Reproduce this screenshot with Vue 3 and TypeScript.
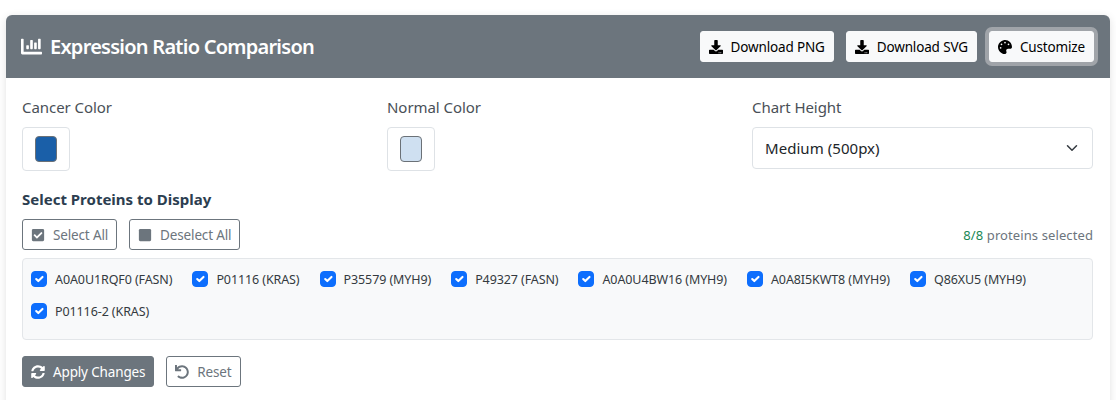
<script setup lang="ts">
import { computed, ref } from 'vue'

interface Protein { id: string; selected: boolean }

const proteins = ref<Protein[]>([
  { id: 'A0A0U1RQF0 (FASN)', selected: true },
  { id: 'P01116 (KRAS)', selected: true },
  { id: 'P35579 (MYH9)', selected: true },
  { id: 'P49327 (FASN)', selected: true },
  { id: 'A0A0U4BW16 (MYH9)', selected: true },
  { id: 'A0A8I5KWT8 (MYH9)', selected: true },
  { id: 'Q86XU5 (MYH9)', selected: true },
  { id: 'P01116-2 (KRAS)', selected: true },
])
const cancer = ref('#1a5fa8')
const normal = ref('#cfe0f1')
const height = ref('500')
const count = computed(() => proteins.value.filter((p) => p.selected).length)
const setAll = (v: boolean) => proteins.value.forEach((p) => (p.selected = v))

const icons = {
  chart: 'M332.8 320h38.4c6.4 0 12.8-6.4 12.8-12.8V172.8c0-6.4-6.4-12.8-12.8-12.8h-38.4c-6.4 0-12.8 6.4-12.8 12.8v134.4c0 6.4 6.4 12.8 12.8 12.8zm96 0h38.4c6.4 0 12.8-6.4 12.8-12.8V76.8c0-6.4-6.4-12.8-12.8-12.8h-38.4c-6.4 0-12.8 6.4-12.8 12.8v230.4c0 6.4 6.4 12.8 12.8 12.8zm-288 0h38.4c6.4 0 12.8-6.4 12.8-12.8v-70.4c0-6.4-6.4-12.8-12.8-12.8h-38.4c-6.4 0-12.8 6.4-12.8 12.8v70.4c0 6.4 6.4 12.8 12.8 12.8zm96 0h38.4c6.4 0 12.8-6.4 12.8-12.8V108.8c0-6.4-6.4-12.8-12.8-12.8h-38.4c-6.4 0-12.8 6.4-12.8 12.8v198.4c0 6.4 6.4 12.8 12.8 12.8zM496 384H64V80c0-8.84-7.16-16-16-16H16C7.16 64 0 71.16 0 80v336c0 17.67 14.33 32 32 32h464c8.84 0 16-7.16 16-16v-32c0-8.84-7.16-16-16-16z',
  download: 'M216 0h80c13.3 0 24 10.7 24 24v168h87.7c17.8 0 26.7 21.5 14.1 34.1L269.7 378.3c-7.5 7.5-19.8 7.5-27.3 0L90.1 226.1c-12.6-12.6-3.7-34.1 14.1-34.1H192V24c0-13.3 10.7-24 24-24zm296 376v112c0 13.3-10.7 24-24 24H24c-13.3 0-24-10.7-24-24V376c0-13.3 10.7-24 24-24h146.7l49 49c20.1 20.1 52.5 20.1 72.6 0l49-49H488c13.3 0 24 10.7 24 24zm-124 88c0-11-9-20-20-20s-20 9-20 20 9 20 20 20 20-9 20-20zm64 0c0-11-9-20-20-20s-20 9-20 20 9 20 20 20 20-9 20-20z',
  palette: 'M204.3 5C104.9 24.4 24.8 104.3 5.2 203.4c-37 187 131.7 326.4 258.8 306.7 41.2-6.4 61.4-54.6 42.5-91.7-23.1-45.4 9.9-98.4 60.9-98.4h79.7c35.8 0 64.8-29.6 64.9-65.3C511.5 97.1 368.1-26.9 204.3 5zM96 320c-17.7 0-32-14.3-32-32s14.3-32 32-32 32 14.3 32 32-14.3 32-32 32zm32-128c-17.7 0-32-14.3-32-32s14.3-32 32-32 32 14.3 32 32-14.3 32-32 32zm128-64c-17.7 0-32-14.3-32-32s14.3-32 32-32 32 14.3 32 32-14.3 32-32 32zm128 64c-17.7 0-32-14.3-32-32s14.3-32 32-32 32 14.3 32 32-14.3 32-32 32z',
  sync: 'M370.72 133.28C339.458 104.008 298.888 87.962 255.848 88c-77.458.068-144.328 53.178-162.791 126.85-1.344 5.363-6.122 9.15-11.651 9.15H24.103c-7.498 0-13.194-6.807-11.807-14.176C33.933 94.924 134.813 8 256 8c66.448 0 126.791 26.136 171.315 68.685L463.03 40.97C478.149 25.851 504 36.559 504 57.941V192c0 13.255-10.745 24-24 24H345.941c-21.382 0-32.09-25.851-16.971-40.971l41.75-41.749zM32 296h134.059c21.382 0 32.09 25.851 16.971 40.971l-41.75 41.75c31.262 29.273 71.835 45.319 114.876 45.28 77.418-.07 144.315-53.144 162.787-126.849 1.344-5.363 6.122-9.15 11.651-9.15h57.304c7.498 0 13.194 6.807 11.807 14.176C478.067 417.076 377.187 504 256 504c-66.448 0-126.791-26.136-171.315-68.685L48.97 471.03C33.851 486.149 8 475.441 8 454.059V320c0-13.255 10.745-24 24-24z',
  undo: 'M212.333 224.333H12c-6.627 0-12-5.373-12-12V12C0 5.373 5.373 0 12 0h48c6.627 0 12 5.373 12 12v78.112C117.773 39.279 184.26 7.47 258.175 8.007c136.906.994 246.448 111.623 246.157 248.532C504.041 393.258 393.12 504 256.333 504c-64.089 0-122.496-24.313-166.51-64.215-5.099-4.622-5.334-12.554-.467-17.42l33.967-33.967c4.474-4.474 11.662-4.717 16.401-.525C170.76 415.336 211.58 432 256.333 432c97.268 0 176-78.716 176-176 0-97.267-78.716-176-176-176-58.496 0-110.28 28.476-142.274 72.333h98.274c6.627 0 12 5.373 12 12v48c0 6.627-5.373 12-12 12z',
  check: 'M400 480H48c-26.51 0-48-21.49-48-48V80c0-26.51 21.49-48 48-48h352c26.51 0 48 21.49 48 48v352c0 26.51-21.49 48-48 48zm-204.686-98.059l184-184c6.248-6.248 6.248-16.379 0-22.627l-22.627-22.627c-6.248-6.248-16.379-6.249-22.628 0L184 302.745l-70.059-70.059c-6.248-6.248-16.379-6.248-22.628 0l-22.627 22.627c-6.248 6.248-6.248 16.379 0 22.627l104 104c6.249 6.25 16.379 6.25 22.628.001z',
  square: 'M400 32H48C21.5 32 0 53.5 0 80v352c0 26.5 21.5 48 48 48h352c26.5 0 48-21.5 48-48V80c0-26.5-21.5-48-48-48z',
}
</script>

<template>
  <div class="page">
    <section class="card">
      <header class="card-header">
        <h2 class="title">
          <svg class="title-icon" viewBox="0 0 512 512"><path :d="icons.chart" /></svg>
          Expression Ratio Comparison
        </h2>
        <div class="header-actions">
          <button class="btn light">
            <svg class="ico" viewBox="0 0 512 512"><path :d="icons.download" /></svg>Download PNG
          </button>
          <button class="btn light">
            <svg class="ico" viewBox="0 0 512 512"><path :d="icons.download" /></svg>Download SVG
          </button>
          <button class="btn light focused">
            <svg class="ico" viewBox="0 0 512 512"><path :d="icons.palette" /></svg>Customize
          </button>
        </div>
      </header>

      <div class="card-body">
        <div class="controls">
          <div class="field">
            <label class="label">Cancer Color</label>
            <input v-model="cancer" class="color" type="color" />
          </div>
          <div class="field">
            <label class="label">Normal Color</label>
            <input v-model="normal" class="color" type="color" />
          </div>
          <div class="field">
            <label class="label">Chart Height</label>
            <div class="select-wrap">
              <select v-model="height" class="select">
                <option value="300">Small (300px)</option>
                <option value="500">Medium (500px)</option>
                <option value="700">Large (700px)</option>
              </select>
              <svg class="chevron" viewBox="0 0 16 16"><path d="m2 5 6 6 6-6" /></svg>
            </div>
          </div>
        </div>

        <h6 class="section-title">Select Proteins to Display</h6>

        <div class="toolbar">
          <div class="toolbar-buttons">
            <button class="btn outline" @click="setAll(true)">
              <svg class="ico" viewBox="0 0 448 512"><path :d="icons.check" /></svg>Select All
            </button>
            <button class="btn outline" @click="setAll(false)">
              <svg class="ico" viewBox="0 0 448 512"><path :d="icons.square" /></svg>Deselect All
            </button>
          </div>
          <small class="counter"><span class="count">{{ count }}/{{ proteins.length }}</span> proteins selected</small>
        </div>

        <div class="protein-box">
          <label v-for="p in proteins" :key="p.id" class="protein">
            <input v-model="p.selected" class="check" type="checkbox" />
            <span>{{ p.id }}</span>
          </label>
        </div>

        <div class="footer-actions">
          <button class="btn solid">
            <svg class="ico" viewBox="0 0 512 512"><path :d="icons.sync" /></svg>Apply Changes
          </button>
          <button class="btn outline">
            <svg class="ico" viewBox="0 0 512 512"><path :d="icons.undo" /></svg>Reset
          </button>
        </div>
      </div>
    </section>
  </div>
</template>

<style scoped>
.page {
  box-sizing: border-box;
  padding: 15px 6px 0;
  height: 400px;
  overflow: hidden;
  font-family: "Noto Sans", "Open Sans", sans-serif;
  color: #212529;
}
.card {
  background: #fff;
  border-radius: 6px;
  box-shadow: 0 2px 8px rgba(0, 0, 0, 0.12);
}
.card-header {
  height: 63px;
  background: #6c757d;
  border-radius: 6px 6px 0 0;
  display: flex;
  align-items: center;
  justify-content: space-between;
  padding: 0 16px 0 15px;
}
.title {
  margin: 0;
  display: flex;
  align-items: center;
  gap: 8px;
  color: #fff;
  font-size: 20px;
  font-weight: 600;
  letter-spacing: -0.75px;
}
.title-icon {
  width: 21px;
  height: 21px;
  fill: #fff;
}
.header-actions {
  display: flex;
  gap: 12px;
}
.btn {
  display: inline-flex;
  align-items: center;
  height: 31px;
  padding: 0 8px;
  border-radius: 3px;
  border: 1px solid transparent;
  font-family: inherit;
  font-size: 13.5px;
  letter-spacing: -0.15px;
  white-space: nowrap;
  cursor: pointer;
}
.ico {
  width: 14px;
  height: 14px;
  margin-right: 8px;
  fill: currentColor;
  flex: none;
}
.btn.light {
  background: #f8f9fa;
  border-color: #f8f9fa;
  color: #000;
}
.btn.focused {
  box-shadow: 0 0 0 4px rgba(211, 212, 213, 0.5);
}
.btn.outline {
  background: #fff;
  border-color: #6c757d;
  color: #6c757d;
}
.btn.solid {
  background: #6c757d;
  border-color: #6c757d;
  color: #fff;
}
.card-body {
  padding: 17px 17px 30px 16px;
}
.controls {
  display: grid;
  grid-template-columns: repeat(3, 1fr);
  column-gap: 24px;
}
.field {
  display: flex;
  flex-direction: column;
  align-items: flex-start;
}
.label {
  font-size: 15px;
  line-height: 24px;
  margin-bottom: 8px;
  color: #495057;
  letter-spacing: -0.05px;
}
.color {
  appearance: none;
  box-sizing: border-box;
  width: 48px;
  height: 44px;
  padding: 8px 12px;
  margin: 0;
  background: #fff;
  border: 1px solid #dee2e6;
  border-radius: 4px;
}
.color::-webkit-color-swatch-wrapper {
  padding: 0;
}
.color::-webkit-color-swatch {
  border: 1px solid #6b7177;
  border-radius: 4px;
}
.select-wrap {
  position: relative;
  width: 100%;
}
.select {
  appearance: none;
  display: block;
  box-sizing: border-box;
  width: 100%;
  height: 42px;
  padding: 0 36px 0 12px;
  background: #fff;
  border: 1px solid #dee2e6;
  border-radius: 4px;
  font-family: inherit;
  font-size: 15px;
  letter-spacing: 0.05px;
  color: #212529;
}
.chevron {
  position: absolute;
  right: 15px;
  top: 15px;
  width: 12px;
  height: 12px;
  fill: none;
  stroke: #343a40;
  stroke-width: 2;
  stroke-linecap: round;
  stroke-linejoin: round;
  pointer-events: none;
}
.section-title {
  margin: 18px 0 0;
  font-size: 15px;
  line-height: 20px;
  font-weight: 700;
  color: #2c3e50;
}
.toolbar {
  display: flex;
  align-items: center;
  justify-content: space-between;
  margin-top: 10px;
}
.toolbar-buttons {
  display: flex;
  gap: 12px;
}
.counter {
  font-size: 13px;
  color: #6c757d;
  letter-spacing: 0.1px;
}
.count {
  color: #198754;
}
.protein-box {
  box-sizing: border-box;
  height: 82px;
  margin-top: 8px;
  padding: 8px;
  display: flex;
  flex-wrap: wrap;
  align-content: flex-start;
  row-gap: 8px;
  column-gap: 20px;
  background: #f8f9fa;
  border: 1px solid #e3e6e9;
  border-radius: 4px;
}
.protein {
  display: inline-flex;
  align-items: center;
  gap: 8px;
  height: 24px;
  font-size: 12.5px;
  letter-spacing: -0.1px;
  color: #343a40;
}
.check {
  appearance: none;
  width: 16px;
  height: 16px;
  margin: 0;
  border-radius: 4px;
  background: #fff;
  border: 1px solid #adb5bd;
}
.check:checked {
  background: #0d6efd url("data:image/svg+xml,%3csvg xmlns='http://www.w3.org/2000/svg' viewBox='0 0 20 20'%3e%3cpath fill='none' stroke='%23fff' stroke-linecap='round' stroke-linejoin='round' stroke-width='3' d='m6 10 3 3 6-6'/%3e%3c/svg%3e") center / 100% no-repeat;
  border-color: #0d6efd;
}
.footer-actions {
  display: flex;
  gap: 12px;
  margin-top: 16px;
}
</style>

<style>
html, body {
  margin: 0;
  background: #fff;
}
</style>
